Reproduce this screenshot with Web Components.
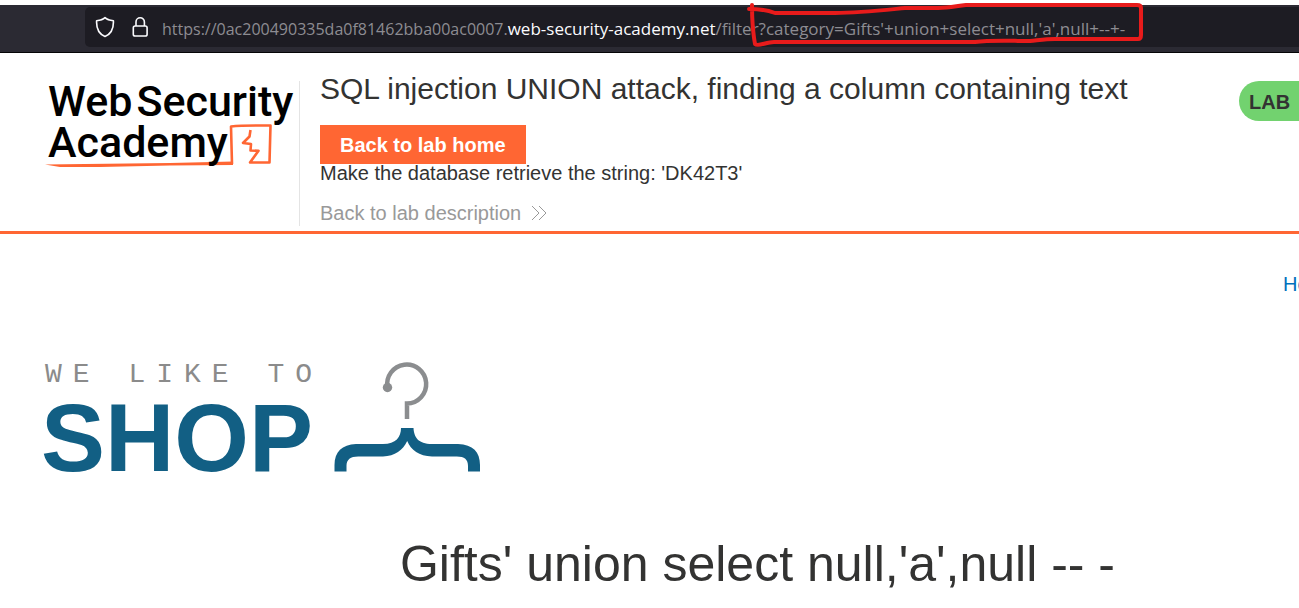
<!DOCTYPE html>
<html lang="en">
<head>
<meta charset="utf-8">
<title>SQL injection UNION attack, finding a column containing text</title>
<style>
  body { margin: 0; background: #fff; color: #333332; font-family: "Liberation Sans", Arial, sans-serif; font-size: 20px; overflow: hidden; }
</style>
</head>
<body>
<address-bar></address-bar>
<lab-header>
  <academy-logo slot="logo"></academy-logo>
  <span slot="title">SQL injection UNION attack, finding a column containing text</span>
  <span slot="hint">Make the database retrieve the string: 'DK42T3'</span>
</lab-header>
<shop-page>
  <shop-logo slot="logo"></shop-logo>
  <span slot="category">Gifts' union select null,'a',null -- -</span>
</shop-page>
<script>
  function define(name, html) {
    customElements.define(name, class extends HTMLElement {
      constructor() {
        super();
        this.attachShadow({ mode: "open" }).innerHTML = html;
      }
    });
  }

  define("address-bar", `
    <style>
      :host { display: block; position: relative; padding-top: 5px; }
      .bar { display: flex; background: #2b2a33; border-bottom: 1px solid #050507; padding: 2px 0 5px 85px; }
      .field { flex: 1; min-width: 0; display: flex; align-items: center; height: 40px; background: #1d1c23; border-radius: 5px 0 0 5px; padding-left: 10px; }
      .icon { flex: none; display: block; }
      .lock { margin-left: 16px; }
      .url { flex: 1; min-width: 0; margin-left: 12px; padding-top: 3px; outline: 0; white-space: nowrap; font: 17px/24px "Open Sans", "Noto Sans", sans-serif; color: #8d8c92; }
      .sub { font-size: 16px; }
      .domain { color: #fbfbfe; }
      .mark { position: absolute; left: 740px; top: 0; pointer-events: none; }
    </style>
    <div class="bar">
      <div class="field">
        <svg class="icon" width="20" height="22" viewBox="0 0 20 22" fill="none" stroke="#fbfbfe" stroke-width="1.6" stroke-linejoin="round"><path d="M10 1.6C8 3.500 5 4.300 1.600 4.700C1.300 11 3.500 17.800 10 20.500C16.500 17.800 18.700 11 18.400 4.700C15 4.300 12 3.500 10 1.600Z"/></svg>
        <svg class="icon lock" width="19" height="22" viewBox="0 0 19 22" fill="none" stroke="#fbfbfe" stroke-width="1.6"><rect x="2.300" y="10" width="13.800" height="10" rx="1.800"/><path d="M5 10V6a4.200 4.200 0 0 1 8.400 0v4"/></svg>
        <div class="url" role="textbox" contenteditable="true" spellcheck="false" aria-label="Address"><span class="sub">https://0ac200490335da0f81462bba00ac0007.</span><span class="domain">web-security-academy.net</span><span>/filter?category=Gifts'+union+select+null,'a',null+--+-</span></div>
      </div>
    </div>
    <svg class="mark" width="420" height="52" viewBox="0 0 420 52" fill="none" stroke="#e81b1b" stroke-width="4" stroke-linecap="round" stroke-linejoin="round" aria-hidden="true"><path d="M12 5C12 18 13 33 15 44C18 47 26 42 34 42H235C250 40 270 41 290 41C300 40 306 39 315 39H398Q401 39 401 35V8Q401 5 397 5H226C216 6 210 8 198 8H165C145 10 120 13 95 13H35C27 10 18 9 9 9"/></svg>
  `);

  define("academy-logo", `
    <style>
      :host { display: block; position: relative; color: #000; font: 500 43px/41px Roboto, sans-serif; }
      .line { position: relative; display: flex; gap: 4px; padding-left: 48px; white-space: nowrap; }
      svg { position: absolute; left: 40px; top: 30px; }
    </style>
    <svg width="240" height="70" viewBox="0 0 240 70" fill="none" stroke="#ff6633" stroke-width="2.6" stroke-linejoin="round" aria-hidden="true">
      <path fill="#ff6633" stroke="none" d="M5 53.500L45 53 130 52 193 50.500V54L130 54.500 60 56 20 56Z"/>
      <path d="M192 53L191 15.500C204 14 220 14.500 230.500 14.500L229.500 51.500L210 51.500L218.500 39.800L210.500 39.500L211 33L203 32L209.500 25.500L210.500 19"/>
    </svg>
    <div class="line"><span>Web</span><span>Security</span></div>
    <div class="line"><span>Academy</span></div>
  `);

  define("lab-header", `
    <style>
      :host { display: flex; align-items: flex-start; height: 178px; border-bottom: 3px solid #ff6633; box-sizing: content-box; }
      .logo { flex: none; box-sizing: border-box; width: 300px; height: 145px; margin-top: 28px; border-right: 1px solid #e4e4e4; }
      .text { flex: 1; min-width: 0; padding: 16px 0 0 20px; display: flex; flex-direction: column; align-items: flex-start; white-space: nowrap; }
      h2 { margin: 0 0 16px; font-weight: 400; font-size: 30px; line-height: 40px; }
      button { margin: 0; border: 0; border-radius: 0; height: 39px; padding: 1px 20px 0; background: #ff6633; color: #fff; font: bold 20px/38px "Liberation Sans", Arial, sans-serif; }
      p { margin: 0; line-height: 18px; }
      a { display: flex; align-items: center; gap: 10px; margin-top: 19px; line-height: 24px; color: #999; text-decoration: none; }
      .badge { flex: none; box-sizing: border-box; width: 60px; height: 40px; margin-top: 28px; padding-left: 10px; border-radius: 20px 0 0 20px; background: #72d26f; font-weight: bold; line-height: 42px; }
    </style>
    <div class="logo"><slot name="logo"></slot></div>
    <div class="text">
      <h2><slot name="title"></slot></h2>
      <button type="button">Back to lab home</button>
      <p><slot name="hint"></slot></p>
      <a href="#">Back to lab description
        <svg width="16" height="16" viewBox="0 0 16 16" fill="none" stroke="#999" aria-hidden="true"><path d="M1 1l7 7-7 7M8 1l7 7-7 7"/></svg>
      </a>
    </div>
    <div class="badge">LAB</div>
  `);

  define("shop-logo", `
    <style>
      :host { display: flex; align-items: flex-start; gap: 10px; padding-left: 41px; }
      .small { padding-left: 4px; color: #8b8b8b; font: 28px/30px "Liberation Mono", monospace; letter-spacing: 11px; white-space: nowrap; }
      .big { color: #125f84; font-weight: bold; font-size: 96px; line-height: 96px; }
      svg { display: block; padding-top: 1px; }
    </style>
    <div><div class="small">WE LIKE TO</div><div class="big">SHOP</div></div>
    <svg width="150" height="112" viewBox="0 0 150 112" fill="none" aria-hidden="true">
      <path stroke="#8b8d8f" stroke-width="4.500" d="M54.500 26.500A19.500 19.500 0 1 1 74 42.500V58"/>
      <circle cx="54.500" cy="26.500" r="4.700" fill="#8b8d8f"/>
      <path fill="#125f84" d="M68 67H80.500C81 76 85 83 99 83H125C140 83.500 147 91 147 104V110.500H135V105C135 98 131 95 122 95.500H99C86 95 78 89 74.200 80C70 89 62 95 50 95.500H27C18 95 13.500 98 13.500 105V110.500H1.500V104C1.500 91 9 83.500 23 83H50C63 83 68 76 68 67Z"/>
    </svg>
  `);

  define("shop-page", `
    <style>
      :host { display: block; }
      nav { display: flex; justify-content: flex-end; padding-top: 38px; line-height: 24px; }
      nav a { flex: none; width: 16px; overflow: hidden; white-space: nowrap; color: #0071bc; text-decoration: none; }
      .logo { padding-top: 64px; }
      h1 { margin: 48px 0 0; padding-left: 216px; text-align: center; font-weight: 400; font-size: 50px; line-height: 60px; white-space: nowrap; }
    </style>
    <nav><a href="#">Home</a></nav>
    <div class="logo"><slot name="logo"></slot></div>
    <h1><slot name="category"></slot></h1>
  `);
</script>
</body>
</html>
